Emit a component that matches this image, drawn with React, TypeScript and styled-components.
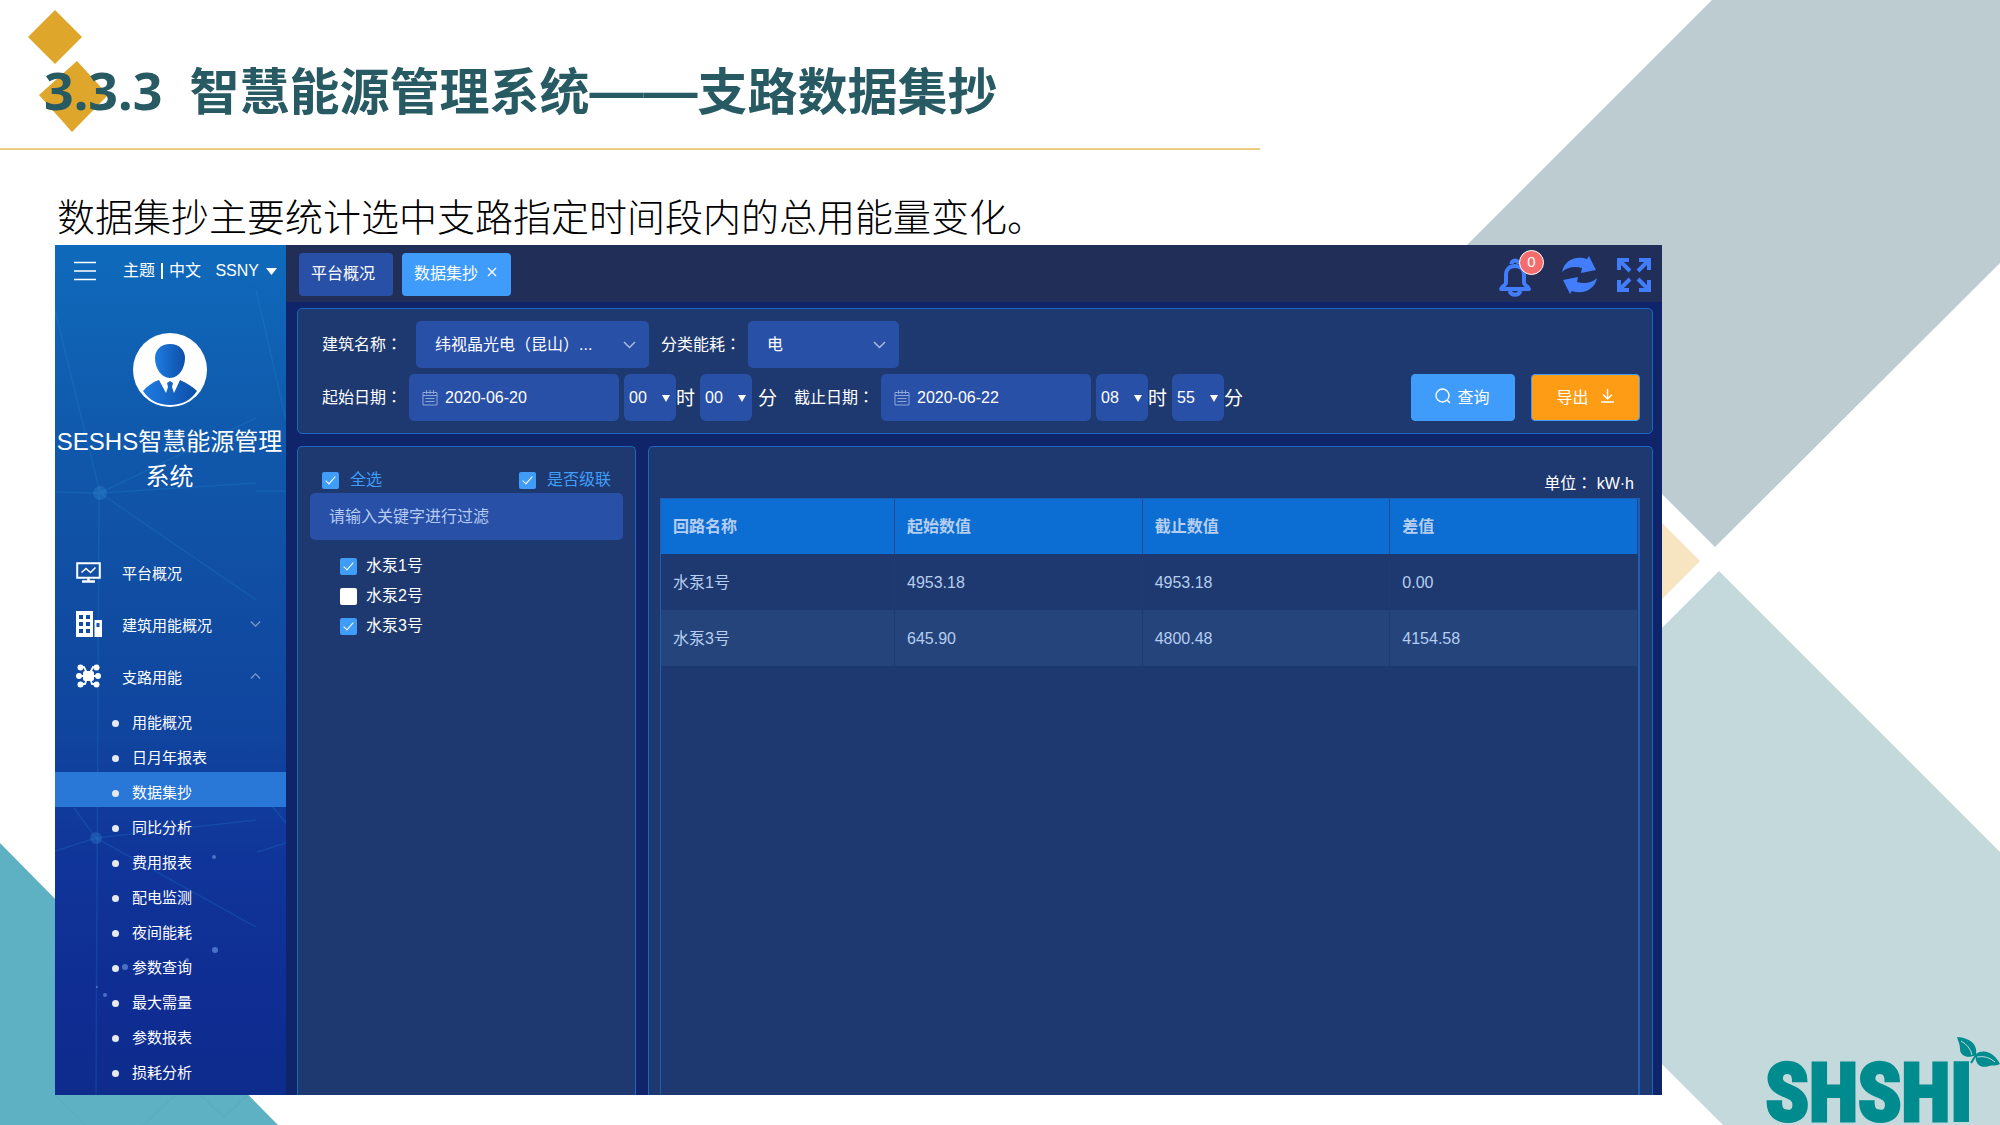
import React, { useState } from "react";
import styled, { createGlobalStyle } from "styled-components";

const GlobalStyle = createGlobalStyle`
  *, *::before, *::after { box-sizing: border-box; }
  body {
    margin: 0;
    background: #ffffff;
    font-family: "Liberation Sans", "Noto Sans CJK SC", sans-serif;
    font-size: 16px;
    color: #ffffff;
  }
  button, input, select { font: inherit; color: inherit; }
  h1, h2, p, ul { margin: 0; padding: 0; }
  ul { list-style: none; }
`;

/* ---------- slide ---------- */

const Slide = styled.main`
  position: relative;
  min-height: 100vh;
  padding-bottom: 30px;
  overflow: hidden;
`;

const Backdrop = styled.svg`
  position: absolute;
  inset: 0;
  width: 100%;
  height: 100%;
`;

const SlideHeader = styled.header`
  position: relative;
  width: 63%;
  height: 150px;
  padding: 55px 0 0 44px;
  border-bottom: 2px solid #ebcc80;
`;

const SlideTitle = styled.h1`
  font-family: "Noto Sans", "Noto Sans CJK SC", sans-serif;
  font-size: 50px;
  font-weight: 700;
  line-height: 72px;
  white-space: pre;
  color: #275a63;
`;

const SectionNumber = styled.span`
  font-size: 52px;
  line-height: 50px;
`;

const Dash = styled.span`
  font-family: "Liberation Sans", sans-serif;
  font-size: 54px;
  line-height: 50px;
`;

const Summary = styled.p`
  position: relative;
  padding: 37px 0 3px 57px;
  font-family: "Noto Sans CJK SC", sans-serif;
  font-size: 38px;
  font-weight: 300;
  line-height: 55px;
  color: #000000;
`;

const Brand = styled.div`
  position: absolute;
  right: 28px;
  bottom: 0;
  display: flex;
`;

const BrandName = styled.span`
  font-family: "Liberation Sans Narrow", "Roboto Condensed", "Liberation Sans", sans-serif;
  font-size: 80px;
  font-weight: 700;
  line-height: 64px;
  color: #008c8f;
  -webkit-text-stroke: 4px #008c8f;
`;

const Leaves = styled.svg`
  position: absolute;
  right: -28px;
  top: -24px;
`;

/* ---------- application window ---------- */

const Window = styled.section`
  position: relative;
  display: flex;
  margin: 0 338px 0 55px;
  background: #0f2469;
`;

const Sidebar = styled.aside`
  position: relative;
  flex: none;
  width: 231px;
  padding-bottom: 8px;
  background: linear-gradient(180deg, #0f6abb 0%, #1059ac 22%, #104ea3 40%, #10449e 58%, #10359a 72%, #0f2d93 88%, #0e2c8c 100%);
`;

const Constellation = styled.svg`
  position: absolute;
  inset: 0;
  width: 100%;
  height: 100%;
`;

const SideTop = styled.div`
  position: relative;
  display: flex;
  align-items: center;
  height: 52px;
  padding: 0 9px 0 19px;
`;

const PlainButton = styled.button`
  display: inline-flex;
  align-items: center;
  gap: 7px;
  padding: 0;
  border: 0;
  background: none;
  line-height: 24px;
  cursor: pointer;
`;

const MenuToggle = styled(PlainButton)`
  margin-right: 27px;
`;

const Separator = styled.span`
  width: 2px;
  height: 16px;
  margin: 0 6px;
  background: #ffffff;
`;

const Account = styled(PlainButton)`
  margin-left: auto;
`;

const Profile = styled.div`
  position: relative;
  display: flex;
  flex-direction: column;
  align-items: center;
  padding: 36px 2px 51px 0;
`;

const SystemName = styled.h2`
  margin-top: 17px;
  font-size: 24px;
  font-weight: 400;
  line-height: 35px;
  text-align: center;
`;

const NavItem = styled.a`
  position: relative;
  display: flex;
  align-items: center;
  height: 52px;
  padding: 2px 25px 0 21px;
  color: #ffffff;
  font-size: 15px;
  text-decoration: none;
`;

const NavIcon = styled.span`
  display: flex;
  width: 46px;
`;

const NavArrow = styled.span`
  display: flex;
  margin-left: auto;
  opacity: 0.45;
`;

const SubNav = styled.ul`
  position: relative;
  padding-top: 1px;
`;

const SubItem = styled.a<{ $active: boolean }>`
  display: flex;
  align-items: center;
  gap: 13px;
  height: 35px;
  padding: 4px 0 0 57px;
  background: ${(p) => (p.$active ? "#2977d6" : "transparent")};
  color: #ffffff;
  font-size: 15px;
  text-decoration: none;

  &::before {
    content: "";
    width: 7px;
    height: 7px;
    margin-top: 3px;
    border-radius: 50%;
    background: #e6e9f0;
  }
`;

const Workspace = styled.div`
  display: flex;
  flex: 1;
  flex-direction: column;
  min-width: 0;
`;

const TopBar = styled.div`
  display: flex;
  align-items: center;
  justify-content: space-between;
  height: 57px;
  padding: 2px 11px 0 13px;
  background: #212e57;
`;

const Tabs = styled.nav`
  display: flex;
  gap: 9px;
`;

const Tab = styled.button<{ $active?: boolean }>`
  display: flex;
  align-items: center;
  gap: 9px;
  height: 43px;
  padding: 0 ${(p) => (p.$active ? 14 : 18)}px 5px 12px;
  border: 0;
  border-radius: 4px;
  background: ${(p) => (p.$active ? "#409cfb" : "#2850a7")};
  cursor: pointer;
`;

const Tools = styled.div`
  display: flex;
  align-items: center;
  gap: 20px;
`;

const ToolButton = styled(PlainButton)`
  position: relative;
  color: #427efb;
`;

const BellButton = styled(ToolButton)`
  margin-right: 11px;
  padding-top: 6px;
`;

const Badge = styled.span`
  position: absolute;
  top: -2px;
  right: -13px;
  width: 25px;
  height: 25px;
  border: 1px solid #ffffff;
  border-radius: 50%;
  background: #f56c6c;
  color: #ffffff;
  font-size: 15px;
  line-height: 22px;
  text-align: center;
`;

const Content = styled.div`
  display: grid;
  flex: 1;
  grid-template-columns: 339px minmax(0, 1fr);
  grid-template-rows: auto 1fr;
  gap: 12px;
  padding: 6px 9px 0 11px;
`;

const Card = styled.section`
  border: 1px solid #1f66bf;
  border-radius: 5px;
  background: #1e396f;
`;

const FilterCard = styled(Card)`
  display: flex;
  flex-direction: column;
  grid-column: 1 / -1;
  gap: 6px;
  padding: 12px 12px 12px 24px;
`;

const FilterRow = styled.div`
  display: flex;
  align-items: center;
`;

const FieldLabel = styled.label<{ $width: number }>`
  flex: none;
  width: ${(p) => p.$width}px;
  padding-bottom: 3px;
`;

const Colon = styled.span`
  font-family: "Noto Sans CJK TC", sans-serif;
  line-height: 16px;
`;

const SelectBox = styled.span<{ $width: number }>`
  position: relative;
  display: flex;
  flex: none;
  width: ${(p) => p.$width}px;
  margin-right: 12px;
`;

const Select = styled.select`
  width: 100%;
  height: 47px;
  padding: 0 40px 0 19px;
  border: 0;
  border-radius: 5px;
  appearance: none;
  background: #2850a7;
`;

const SelectMark = styled.span`
  position: absolute;
  top: 50%;
  right: 13px;
  display: flex;
  transform: translateY(-50%);
  color: #a9bce0;
  pointer-events: none;
`;

const DateBox = styled.span`
  position: relative;
  display: flex;
  flex: none;
  width: 210px;
  margin-right: 5px;
`;

const DateIcon = styled.span`
  position: absolute;
  top: 50%;
  left: 13px;
  display: flex;
  transform: translateY(-50%);
  color: #8fa6d8;
  pointer-events: none;
`;

const TextInput = styled.input`
  width: 100%;
  height: 47px;
  padding: 0 19px;
  border: 0;
  border-radius: 5px;
  background: #2850a7;

  &::placeholder {
    color: #b4cbf3;
    opacity: 1;
  }
`;

const DateInput = styled(TextInput)`
  padding: 0 10px 0 36px;
`;

const TimeBox = styled.span`
  position: relative;
  display: flex;
  flex: none;
  width: 52px;
`;

const TimeSelect = styled(Select)`
  padding: 0 5px;
  border-radius: 6px;
`;

const TimeMark = styled.span`
  position: absolute;
  top: 21px;
  right: 6px;
  border: 4px solid transparent;
  border-top: 7px solid #ffffff;
  border-bottom: 0;
  pointer-events: none;
`;

const TimeUnit = styled.span<{ $spaced?: boolean }>`
  flex: none;
  width: ${(p) => (p.$spaced ? 42 : 24)}px;
  padding-bottom: 3px;
  padding-left: ${(p) => (p.$spaced ? 6 : 0)}px;
  font-size: 19px;
`;

const Actions = styled.div`
  display: flex;
  gap: 16px;
  margin-left: auto;
`;

const ActionButton = styled.button<{ $tone: "query" | "export" }>`
  display: flex;
  align-items: center;
  justify-content: center;
  gap: ${(p) => (p.$tone === "query" ? 6 : 12)}px;
  width: ${(p) => (p.$tone === "query" ? 104 : 109)}px;
  height: 47px;
  padding: 0 1px 3px 0;
  border: 1px solid #409efb;
  border-radius: 4px;
  background: ${(p) => (p.$tone === "query" ? "#409cfb" : "#ff9c16")};
  cursor: pointer;
`;

const LowerCard = styled(Card)`
  border-bottom: 0;
  border-bottom-left-radius: 0;
  border-bottom-right-radius: 0;
`;

const TreeCard = styled(LowerCard)`
  padding: 20px 12px 0;
`;

const TreeOptions = styled.div`
  display: flex;
  justify-content: space-between;
  padding: 0 12px;
  color: #409efb;
`;

const CheckLabel = styled.label<{ $gap: number }>`
  display: flex;
  align-items: center;
  gap: ${(p) => p.$gap}px;
  line-height: 26px;
`;

const CheckBox = styled.input`
  display: grid;
  place-items: center;
  width: 17px;
  height: 17px;
  margin: 0;
  border-radius: 2px;
  appearance: none;
  background: #ffffff;

  &:checked {
    background: #3f9cf7;
  }

  &:checked::before {
    content: "";
    width: 5px;
    height: 10px;
    margin-bottom: 3px;
    border: solid #ffffff;
    border-width: 0 1px 1px 0;
    transform: rotate(42deg);
  }
`;

const Tree = styled.ul`
  display: grid;
  gap: 4px;
  padding: 13px 0 0 30px;
`;

const TableCard = styled(LowerCard)`
  display: flex;
  flex-direction: column;
  padding: 22px 12px 0 11px;
`;

const UnitNote = styled.p`
  padding-right: 6px;
  line-height: 29px;
  text-align: right;
  white-space: pre;
`;

const TableFrame = styled.div`
  flex: 1;
  border: solid #1f5cb3;
  border-width: 1px 2px 0 1px;
`;

const Table = styled.table`
  width: 100%;
  border-collapse: separate;
  border-spacing: 0;
  table-layout: fixed;
  color: #b5cdf0;
  line-height: 24px;
`;

const HeadCell = styled.th`
  height: 55px;
  padding: 0 12px;
  border-right: 1px solid #24488c;
  background: #0c6dd3;
  text-align: left;

  &:first-child { width: 234px; }
`;

const BodyRow = styled.tr<{ $striped: boolean }>`
  background: ${(p) => (p.$striped ? "#24447b" : "transparent")};
`;

const Cell = styled.td`
  height: 56px;
  padding: 2px 12px 0;
  border-right: 1px solid #203b70;
`;

/* ---------- icons ---------- */

const AvatarIcon = () => (
  <svg width="74" height="74" viewBox="0 0 74 74" aria-hidden="true">
    <defs>
      <linearGradient id="suit" x1="0" x2="1">
        <stop offset="0" stopColor="#1f7be2" />
        <stop offset="1" stopColor="#0d4fa8" />
      </linearGradient>
    </defs>
    <circle cx="37" cy="37" r="37" fill="#fff" />
    <path d="M37 11c9 0 15 6 15 14 0 10-6 20-15 20s-15-10-15-20c0-8 6-14 15-14z" fill="url(#suit)" />
    <path d="M26 47l7 13 2-6-1-4 3-2 3 2-1 4 2 6 6-13c7 3 13 7 17 11-6 9-15 14-27 14S16 67 10 58c4-5 10-9 16-11z" fill="url(#suit)" />
  </svg>
);

const MonitorIcon = () => (
  <svg width="25" height="21" viewBox="0 0 25 21" fill="none" stroke="#fff" aria-hidden="true">
    <path d="M1.2 1.2h22.6v14.6H1.2z" strokeWidth="2" />
    <path d="M5.500 10.500l4.500-4 4.500 4 5-5" strokeWidth="1.600" />
    <path d="M12.500 16v3M6 19.500h13" strokeWidth="2.400" />
  </svg>
);

const BuildingIcon = () => (
  <svg width="26" height="26" viewBox="0 0 26 26" fill="#fff" fillRule="evenodd" aria-hidden="true">
    <path d="M0 0h17v26H0zM3 4v4h4V4zm7 0v4h4V4zM3 11v4h4v-4zm7 0v4h4v-4zM3 18v4h4v-4zm7 0v4h4v-4z" />
    <path d="M18.500 9H26v17h-7.500zM20.500 12v4h3v-4z" />
  </svg>
);

const NetworkIcon = () => (
  <svg width="25" height="24" viewBox="0 0 25 24" aria-hidden="true">
    <path d="M4 4l4-1 3 6M21 4l-4-1-3 6M3 12h19M4 20l5 0 2-6M21 20l-5 0-2-6" fill="none" stroke="#fff" strokeWidth="1.800" />
    <rect x="7" y="7" width="11" height="10" rx="2" fill="#fff" />
    {[[4.500, 3.500], [20.500, 3.500], [3, 12], [22, 12], [4.500, 20.500], [20.500, 20.500]].map(([x, y]) => (
      <circle key={`${x}-${y}`} cx={x} cy={y} r="3" fill="#fff" />
    ))}
  </svg>
);

const Chevron = ({ up = false, size = 13 }: { up?: boolean; size?: number }) => (
  <svg width={size} height="8" viewBox="0 0 13 8" fill="none" stroke="currentColor" strokeWidth="1.500" aria-hidden="true">
    <path d={up ? "M1 7l5.500-5.500L12 7" : "M1 1l5.500 5.500L12 1"} />
  </svg>
);

const BellIcon = () => (
  <svg width="32" height="40" viewBox="0 0 32 40" fill="none" stroke="currentColor" strokeLinejoin="round" aria-hidden="true">
    <path d="M16 8c-6 0-9 4-9 9v8c0 3-5 3-5 6h28c0-3-5-3-5-6v-8c0-5-3-9-9-9z" strokeWidth="4" />
    <path d="M12.500 6a3.500 3.500 0 0 1 7 0M10.500 33c2 5 9 5 11 0" strokeWidth="4" />
  </svg>
);

const RefreshIcon = () => (
  <svg width="35" height="38" viewBox="0 0 35 38" fill="currentColor" aria-hidden="true">
    <path d="M0 16C2 5 13-1 25 3l2-3 7 14-15 3 1-5C13 10 5 11 0 16z" />
    <path d="M35 22c-2 11-13 17-25 13l-2 3L1 24l15-3-1 5c7 2 15 1 20-4z" />
  </svg>
);

const ExpandIcon = () => (
  <svg width="34" height="34" viewBox="0 0 34 34" fill="none" stroke="currentColor" strokeWidth="4" aria-hidden="true">
    <path d="M2 12V2h10M2 2l11 11M22 2h10v10M32 2L21 13M2 22v10h10M2 32l11-11M32 22v10H22M32 32L21 21" />
  </svg>
);

const CalendarIcon = () => (
  <svg width="16" height="16" viewBox="0 0 16 16" fill="none" stroke="currentColor" aria-hidden="true">
    <path d="M1 2.500h14v12.500H1zM1 5.500h14M4.500 0v4M8 0v4M11.500 0v4M3.500 8.500h9M3.500 11.500h9" />
  </svg>
);

const SearchIcon = () => (
  <svg width="16" height="16" viewBox="0 0 16 16" fill="none" stroke="#fff" strokeWidth="1.400" aria-hidden="true">
    <circle cx="7.500" cy="7.500" r="6.500" />
    <path d="M12 12l3 3" />
  </svg>
);

const DownloadIcon = () => (
  <svg width="13" height="14" viewBox="0 0 13 14" fill="none" stroke="#fff" strokeWidth="1.400" aria-hidden="true">
    <path d="M6.500 0v9.500M2 5.500l4.500 4.500L11 5.500M0 13h13" />
  </svg>
);

/* ---------- data ---------- */

const subItems = ["用能概况", "日月年报表", "数据集抄", "同比分析", "费用报表", "配电监测", "夜间能耗", "参数查询", "最大需量", "参数报表", "损耗分析"];

const readings = [
  ["水泵1号", "4953.18", "4953.18", "0.00"],
  ["水泵3号", "645.90", "4800.48", "4154.58"],
];

const Time = ({ label, value, unit, spaced }: { label: string; value: string; unit: string; spaced?: boolean }) => (
  <>
    <TimeBox>
      <TimeSelect aria-label={label} defaultValue={value}>
        <option>{value}</option>
      </TimeSelect>
      <TimeMark />
    </TimeBox>
    <TimeUnit $spaced={spaced}>{unit}</TimeUnit>
  </>
);

const Field = ({ id, name, width }: { id: string; name: string; width: number }) => (
  <FieldLabel htmlFor={id} $width={width}>{name}<Colon>：</Colon></FieldLabel>
);

const DateField = ({ id, value }: { id: string; value: string }) => (
  <DateBox>
    <DateInput id={id} type="text" defaultValue={value} />
    <DateIcon><CalendarIcon /></DateIcon>
  </DateBox>
);

export default function App() {
  const [active, setActive] = useState("数据集抄");

  return (
    <Slide>
      <GlobalStyle />
      <Backdrop viewBox="0 0 2000 1125" preserveAspectRatio="xMidYMid slice" aria-hidden="true">
        <path d="M1712 0H2000V263L1715 547L1440 272z" fill="#bcccd0" />
        <path d="M1700 561L1640 501V621z" fill="#f7e4c1" />
        <path d="M1719 571L2000 852V1125H1723L1443 846z" fill="#c3d9db" />
        <path d="M0 843L278 1125H0z" fill="#5db1c3" />
        <path d="M55 1095l31 30M143 1125l33-30M200 1095l24 22 24-22" fill="none" stroke="#57abbe" />
        <path d="M55 10L82 37 55 64 28 37z" fill="#dfa62c" />
        <path d="M77 61L108 95 72 132 39 95z" fill="#dfa62c" />
      </Backdrop>

      <SlideHeader>
        <SlideTitle><SectionNumber>3.3.3  </SectionNumber>智慧能源管理系统<Dash>——</Dash>支路数据集抄</SlideTitle>
      </SlideHeader>
      <Summary>数据集抄主要统计选中支路指定时间段内的总用能量变化。</Summary>

      <Window>
        <Sidebar>
          <Constellation viewBox="0 0 231 850" preserveAspectRatio="none" aria-hidden="true">
            <g fill="none" stroke="#2f9be0" strokeOpacity="0.18" strokeWidth="1.500">
              <path d="M0 65L45 248M45 248L201 173M45 248L201 238M45 248L201 355M0 247L45 248M44 248L41 850M201 45L231 175M201 246h30" />
              <path d="M19 563L41 593L201 575M41 593L0 606M41 593L201 682M217 561L231 578M202 607L231 598" />
            </g>
            <g fill="#3f9be0" fillOpacity="0.25">
              <circle cx="45" cy="248" r="7" />
              <circle cx="41" cy="593" r="6" />
            </g>
            <g fill="#6f9fe6" fillOpacity="0.6">
              <circle cx="159" cy="612" r="2" />
              <circle cx="160" cy="705" r="3" />
              <circle cx="70" cy="722" r="3" />
              <circle cx="50" cy="750" r="2" />
              <circle cx="42" cy="742" r="1" />
              <circle cx="132" cy="715" r="2" />
            </g>
          </Constellation>

          <SideTop>
            <MenuToggle type="button" aria-label="菜单">
              <svg width="22" height="20" viewBox="0 0 22 20" stroke="#fff" strokeWidth="1.600" aria-hidden="true">
                <path d="M0 1.500h22M0 10h22M0 18.500h22" />
              </svg>
            </MenuToggle>
            <PlainButton type="button">主题</PlainButton>
            <Separator />
            <PlainButton type="button">中文</PlainButton>
            <Account type="button">
              SSNY
              <svg width="11" height="7" viewBox="0 0 11 7" fill="#fff" aria-hidden="true"><path d="M0 0h11L5.500 7z" /></svg>
            </Account>
          </SideTop>

          <Profile>
            <AvatarIcon />
            <SystemName>SESHS智慧能源管理系统</SystemName>
          </Profile>

          <nav>
            <NavItem href="#overview"><NavIcon><MonitorIcon /></NavIcon>平台概况</NavItem>
            <NavItem href="#building">
              <NavIcon><BuildingIcon /></NavIcon>建筑用能概况
              <NavArrow><Chevron size={11} /></NavArrow>
            </NavItem>
            <NavItem href="#branch">
              <NavIcon><NetworkIcon /></NavIcon>支路用能
              <NavArrow><Chevron up size={11} /></NavArrow>
            </NavItem>
            <SubNav>
              {subItems.map((name) => (
                <li key={name}>
                  <SubItem href="#branch" $active={name === active} onClick={() => setActive(name)}>{name}</SubItem>
                </li>
              ))}
            </SubNav>
          </nav>
        </Sidebar>

        <Workspace>
          <TopBar>
            <Tabs>
              <Tab type="button">平台概况</Tab>
              <Tab type="button" $active>
                数据集抄
                <svg width="10" height="10" viewBox="0 0 10 10" stroke="#fff" strokeWidth="1.300" aria-hidden="true"><path d="M1 1l8 8M9 1L1 9" /></svg>
              </Tab>
            </Tabs>
            <Tools>
              <BellButton type="button" aria-label="消息"><BellIcon /><Badge>0</Badge></BellButton>
              <ToolButton type="button" aria-label="刷新"><RefreshIcon /></ToolButton>
              <ToolButton type="button" aria-label="全屏"><ExpandIcon /></ToolButton>
            </Tools>
          </TopBar>

          <Content>
            <FilterCard>
              <FilterRow>
                <Field id="building" name="建筑名称" width={94} />
                <SelectBox $width={233}>
                  <Select id="building"><option>纬视晶光电（昆山）...</option></Select>
                  <SelectMark><Chevron /></SelectMark>
                </SelectBox>
                <Field id="energy" name="分类能耗" width={87} />
                <SelectBox $width={151}>
                  <Select id="energy"><option>电</option></Select>
                  <SelectMark><Chevron /></SelectMark>
                </SelectBox>
              </FilterRow>
              <FilterRow>
                <Field id="from" name="起始日期" width={87} />
                <DateField id="from" value="2020-06-20" />
                <Time label="起始时" value="00" unit="时" />
                <Time label="起始分" value="00" unit="分" spaced />
                <Field id="to" name="截止日期" width={87} />
                <DateField id="to" value="2020-06-22" />
                <Time label="截止时" value="08" unit="时" />
                <Time label="截止分" value="55" unit="分" />
                <Actions>
                  <ActionButton type="button" $tone="query"><SearchIcon />查询</ActionButton>
                  <ActionButton type="button" $tone="export">导出<DownloadIcon /></ActionButton>
                </Actions>
              </FilterRow>
            </FilterCard>

            <TreeCard>
              <TreeOptions>
                <CheckLabel $gap={11}><CheckBox type="checkbox" defaultChecked />全选</CheckLabel>
                <CheckLabel $gap={11}><CheckBox type="checkbox" defaultChecked />是否级联</CheckLabel>
              </TreeOptions>
              <TextInput type="text" aria-label="过滤" placeholder="请输入关键字进行过滤" />
              <Tree>
                {["水泵1号", "水泵2号", "水泵3号"].map((name) => (
                  <li key={name}>
                    <CheckLabel $gap={9}>
                      <CheckBox type="checkbox" defaultChecked={name !== "水泵2号"} />
                      {name}
                    </CheckLabel>
                  </li>
                ))}
              </Tree>
            </TreeCard>

            <TableCard>
              <UnitNote>单位<Colon>：</Colon> kW·h</UnitNote>
              <TableFrame>
                <Table>
                  <thead>
                    <tr>
                      {["回路名称", "起始数值", "截止数值", "差值"].map((name) => (
                        <HeadCell key={name} scope="col">{name}</HeadCell>
                      ))}
                    </tr>
                  </thead>
                  <tbody>
                    {readings.map((row, i) => (
                      <BodyRow key={row[0]} $striped={i % 2 === 1}>
                        {row.map((value, j) => <Cell key={j}>{value}</Cell>)}
                      </BodyRow>
                    ))}
                  </tbody>
                </Table>
              </TableFrame>
            </TableCard>
          </Content>
        </Workspace>
      </Window>

      <Brand>
        <BrandName>SHSHI</BrandName>
        <Leaves width="43" height="34" viewBox="0 0 43 34" aria-hidden="true">
          <path d="M0 0C13 1 21 7 19 18 11 22 3 19 3 12 3 7 1 4 0 0z" fill="#008c8f" />
          <path d="M43 27C38 17 28 11 19 17 17 27 24 32 32 29 36 28 40 29 43 27z" fill="#008c8f" />
          <path d="M4 4Q13 9 15 18M20 20Q30 18 38 25" fill="none" stroke="#c3d9db" />
          <path d="M19 18L14 26" stroke="#008c8f" strokeWidth="2" />
        </Leaves>
      </Brand>
    </Slide>
  );
}
